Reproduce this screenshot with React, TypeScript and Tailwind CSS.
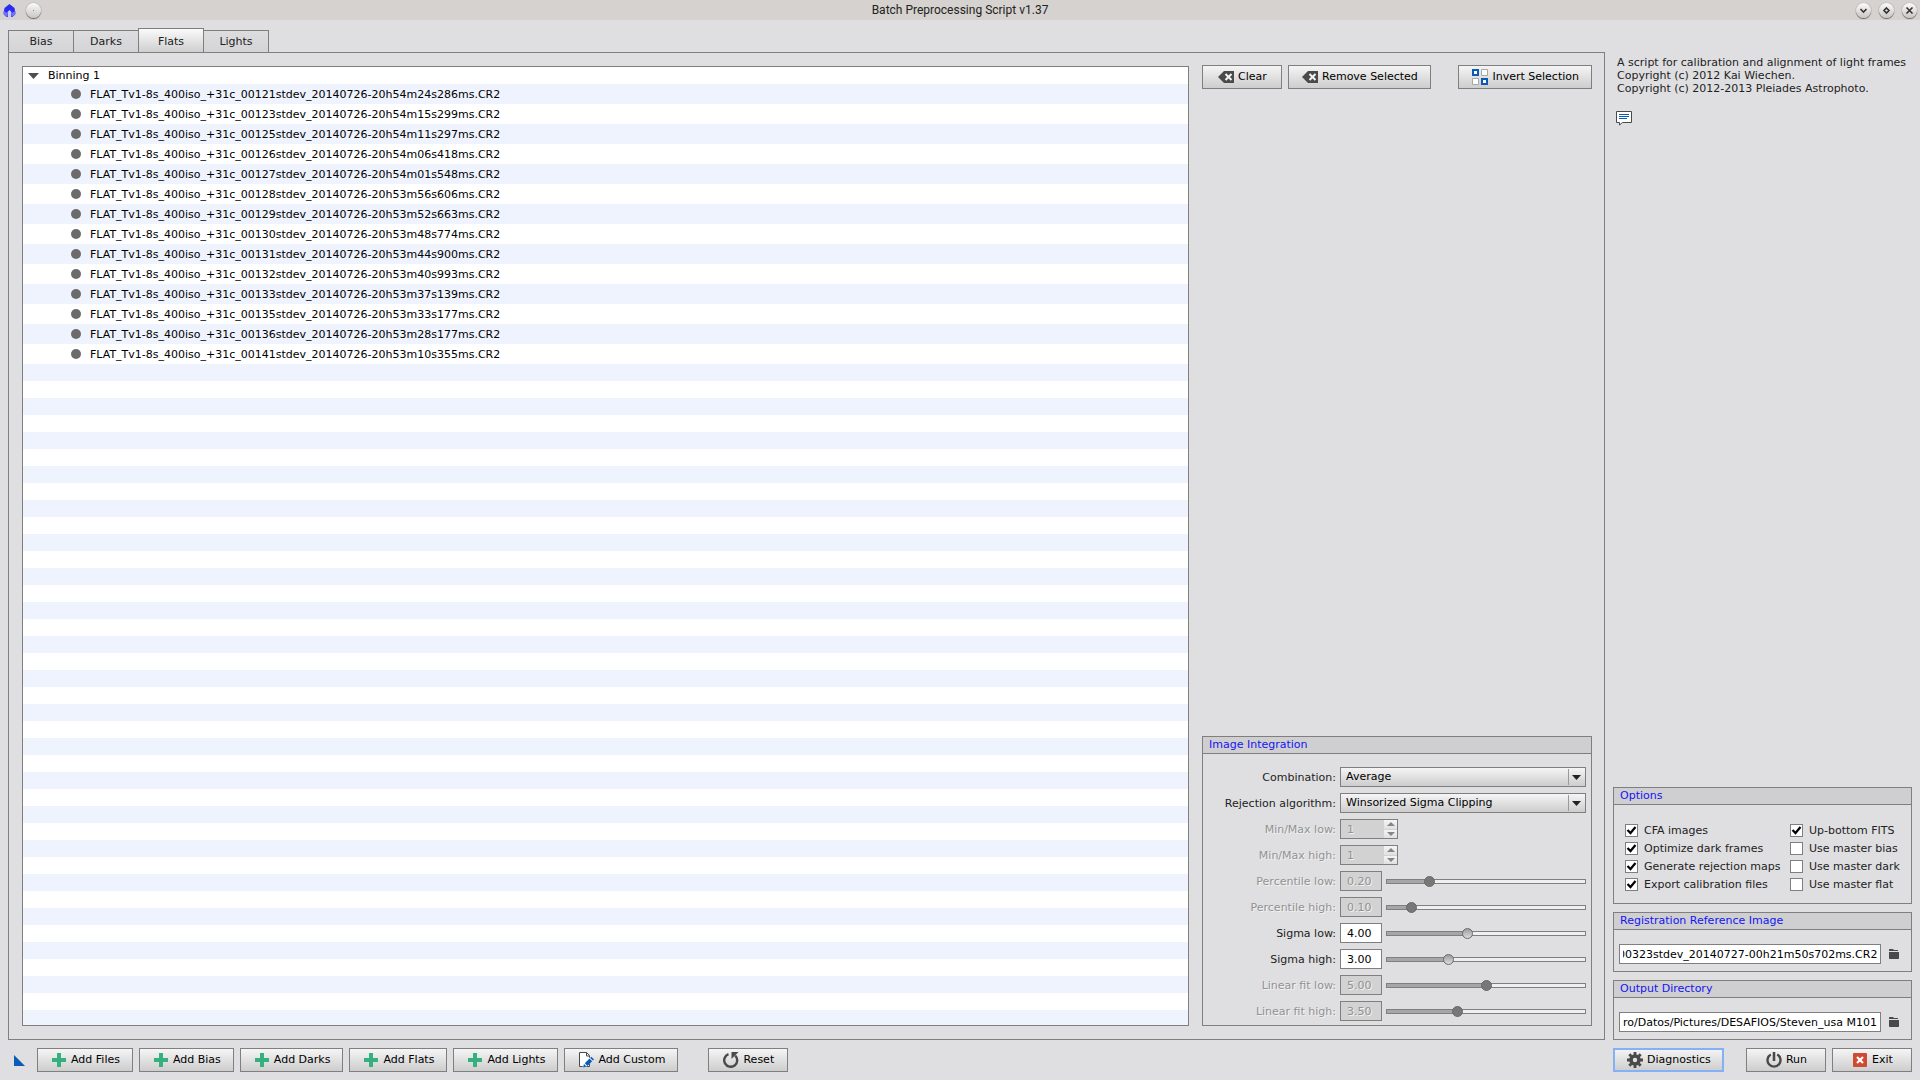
import { useEffect, useRef, useState, type ReactNode } from "react";

const FILES = [
  "FLAT_Tv1-8s_400iso_+31c_00121stdev_20140726-20h54m24s286ms.CR2",
  "FLAT_Tv1-8s_400iso_+31c_00123stdev_20140726-20h54m15s299ms.CR2",
  "FLAT_Tv1-8s_400iso_+31c_00125stdev_20140726-20h54m11s297ms.CR2",
  "FLAT_Tv1-8s_400iso_+31c_00126stdev_20140726-20h54m06s418ms.CR2",
  "FLAT_Tv1-8s_400iso_+31c_00127stdev_20140726-20h54m01s548ms.CR2",
  "FLAT_Tv1-8s_400iso_+31c_00128stdev_20140726-20h53m56s606ms.CR2",
  "FLAT_Tv1-8s_400iso_+31c_00129stdev_20140726-20h53m52s663ms.CR2",
  "FLAT_Tv1-8s_400iso_+31c_00130stdev_20140726-20h53m48s774ms.CR2",
  "FLAT_Tv1-8s_400iso_+31c_00131stdev_20140726-20h53m44s900ms.CR2",
  "FLAT_Tv1-8s_400iso_+31c_00132stdev_20140726-20h53m40s993ms.CR2",
  "FLAT_Tv1-8s_400iso_+31c_00133stdev_20140726-20h53m37s139ms.CR2",
  "FLAT_Tv1-8s_400iso_+31c_00135stdev_20140726-20h53m33s177ms.CR2",
  "FLAT_Tv1-8s_400iso_+31c_00136stdev_20140726-20h53m28s177ms.CR2",
  "FLAT_Tv1-8s_400iso_+31c_00141stdev_20140726-20h53m10s355ms.CR2",
];

const TABS = ["Bias", "Darks", "Flats", "Lights"];

const SLIDERS = [
  { label: "Percentile low:", initial: 0.2, max: 1, disabled: true },
  { label: "Percentile high:", initial: 0.1, max: 1, disabled: true },
  { label: "Sigma low:", initial: 4, max: 10, disabled: false },
  { label: "Sigma high:", initial: 3, max: 10, disabled: false },
  { label: "Linear fit low:", initial: 5, max: 10, disabled: true },
  { label: "Linear fit high:", initial: 3.5, max: 10, disabled: true },
];

const OPTIONS = [
  { label: "CFA images", checked: true },
  { label: "Up-bottom FITS", checked: true },
  { label: "Optimize dark frames", checked: true },
  { label: "Use master bias", checked: false },
  { label: "Generate rejection maps", checked: true },
  { label: "Use master dark", checked: false },
  { label: "Export calibration files", checked: true },
  { label: "Use master flat", checked: false },
];

/* Icons */

function PlusIcon() {
  return (
    <svg className="size-4" viewBox="0 0 16 16">
      <path d="M6 1h4v5h5v4h-5v5H6v-5H1V6h5z" fill="#35b07e" />
    </svg>
  );
}

function ClearIcon() {
  return (
    <svg className="size-4" viewBox="0 0 16 16">
      <path d="M6 2h10v12H6L0 8z" fill="#4a4a4a" />
      <path d="M7.500 5l6 6M13.500 5l-6 6" stroke="#f4f4f4" strokeWidth="2" />
    </svg>
  );
}

function InvertIcon() {
  return (
    <svg className="size-4" viewBox="0 0 16 16" fill="#fff">
      <path d="M1 1h5v5H1zM10 10h5v5h-5z" stroke="#0a5ab8" strokeWidth="2" />
      <path d="M9.500 .5h6v6h-6zM.5 9.500h6v6h-6z" stroke="#a8a8a8" />
    </svg>
  );
}

function CustomIcon() {
  return (
    <svg className="size-4" viewBox="0 0 16 16">
      <path d="M1.500 .5h7l3 3v11h-10z" fill="#fff" stroke="#4a4a4a" />
      <path d="M8.500 .5v3.500h3" fill="none" stroke="#4a4a4a" />
      <path d="M4.500 15.500l1-4 6-6 3.500 3-6.500 6z" fill="#fff" />
      <path d="M5 15.500l1-3.500 2.500 2.500z" fill="#0a5ab8" />
      <path d="M6.800 11.300l4.700-4.700 2.700 2.700-4.700 4.700z" fill="#0a5ab8" />
      <path d="M12.200 5.900l1.200-1.200 2.600 2.700-1.200 1.200z" fill="#0a5ab8" />
    </svg>
  );
}

function ResetIcon() {
  return (
    <svg className="size-4" viewBox="0 0 16 16">
      <path
        d="M5.500 2.200A6.500 6.500 0 1 0 12.200 3.600"
        fill="none"
        stroke="#4a4a4a"
        strokeWidth="2.400"
      />
      <path d="M8.500 0h7l-7 7z" fill="#4a4a4a" />
    </svg>
  );
}

function GearIcon() {
  return (
    <svg className="size-4" viewBox="0 0 16 16" fill="none" stroke="#4a4a4a">
      <circle cx="8" cy="8" r="4" strokeWidth="3.600" />
      <path
        d="M8 0v3M8 13v3M0 8h3M13 8h3M2.300 2.300l2.200 2.200M11.500 11.500l2.200 2.200M13.700 2.300l-2.200 2.200M4.500 11.500l-2.200 2.200"
        strokeWidth="2.800"
      />
    </svg>
  );
}

function PowerIcon() {
  return (
    <svg className="size-4" viewBox="0 0 16 16" fill="none" stroke="#4a4a4a">
      <path d="M4.800 2.500a6.500 6.500 0 1 0 6.400 0" strokeWidth="2.400" />
      <path d="M8 0v9" strokeWidth="2.600" />
    </svg>
  );
}

function ExitIcon() {
  return (
    <svg className="size-4" viewBox="0 0 16 16">
      <rect x="1" y="1" width="14" height="14" rx="1" fill="#cf4a30" />
      <path d="M5 5l6 6M11 5l-6 6" stroke="#fff" strokeWidth="2.200" />
    </svg>
  );
}

function FolderIcon() {
  return (
    <svg className="h-3 w-3" viewBox="0 0 12 12" fill="#4a4a4a">
      <path d="M1 3V1.500L1.500 1H5l1 1h4v1z" />
      <path d="M1 4h10v6.500l-.5.5h-9l-.5-.5z" />
    </svg>
  );
}

function CommentIcon() {
  return (
    <svg className="size-4" viewBox="0 0 16 16">
      <path
        d="M.5 1.500h15v11H6.500L3.500 15v-2.500h-3z"
        fill="#fff"
        stroke="#4a4a4a"
      />
      <path d="M3 4.500h10M3 6.500h10M3 8.500h8" stroke="#0a5ab8" />
    </svg>
  );
}

/* Controls */

interface PushButtonProps {
  icon: ReactNode;
  children: ReactNode;
  focused?: boolean;
}

function PushButton({ icon, children, focused = false }: PushButtonProps) {
  return (
    <button
      type="button"
      className={`flex h-6 min-w-20 items-center justify-center gap-1 whitespace-nowrap bg-linear-to-b from-[#f5f5f5] to-[#cdcdcd] pr-3 pl-[13px] text-black ${
        focused
          ? "border border-[#84b0f5] outline outline-[#84b0f5] -outline-offset-2"
          : "border border-[#7f7f7f]"
      }`}
    >
      {icon}
      <span className="pb-0.5">{children}</span>
    </button>
  );
}

function Group({ title, children }: { title: string; children: ReactNode }) {
  return (
    <section className="border border-[#7f7f7f]">
      <h2 className="h-[17px] border-b border-[#7f7f7f] bg-[#cfcfd1] pl-1.5 leading-4 text-[#1414f5]">
        {title}
      </h2>
      {children}
    </section>
  );
}

const DISABLED_TEXT = "text-[#929292] [text-shadow:1px_1px_0_#f2f2f2]";

function SelectRow({ id, label, options }: { id: string; label: string; options: string[] }) {
  return (
    <div className="flex h-5 items-center gap-1">
      <label htmlFor={id} className="w-[133px] text-right">
        {label}
      </label>
      <div className="relative flex-1">
        <select
          id={id}
          className="block h-5 w-full appearance-none border border-[#7f7f7f] bg-linear-to-b from-[#f5f5f5] to-[#cdcdcd] px-[5px] leading-4 text-black"
        >
          {options.map((option) => (
            <option key={option}>{option}</option>
          ))}
        </select>
        <span className="pointer-events-none absolute inset-y-0.5 right-0.5 flex w-4 items-center justify-center border-l border-[#9a9a9a]">
          <svg className="h-[5px] w-[9px]" viewBox="0 0 9 5">
            <path d="M0 0h9L4.500 5z" fill="#222" />
          </svg>
        </span>
      </div>
    </div>
  );
}

function SpinRow({ id, label }: { id: string; label: string }) {
  return (
    <div className="flex h-5 items-center gap-1">
      <label htmlFor={id} className={`w-[133px] text-right ${DISABLED_TEXT}`}>
        {label}
      </label>
      <div className="flex h-5 w-[58px] border border-[#7f7f7f] bg-[#d2d2d2]">
        <input
          id={id}
          defaultValue="1"
          disabled
          className={`min-w-0 flex-1 pl-1.5 ${DISABLED_TEXT}`}
        />
        <div className="grid w-[13px] grid-rows-2 gap-px">
          <button type="button" disabled aria-label="Increase" className="grid place-items-center bg-linear-to-b from-[#f5f5f5] to-[#e0e0e0]">
            <svg className="h-1 w-2" viewBox="0 0 8 4">
              <path d="M0 4h8L4 0z" fill="#858585" />
            </svg>
          </button>
          <button type="button" disabled aria-label="Decrease" className="grid place-items-center bg-linear-to-b from-[#f5f5f5] to-[#e0e0e0]">
            <svg className="h-1 w-2" viewBox="0 0 8 4">
              <path d="M0 0h8L4 4z" fill="#858585" />
            </svg>
          </button>
        </div>
      </div>
    </div>
  );
}

interface SliderRowProps {
  id: string;
  label: string;
  initial: number;
  max: number;
  disabled: boolean;
}

function SliderRow({ id, label, initial, max, disabled }: SliderRowProps) {
  const [value, setValue] = useState(initial);

  return (
    <div className="flex h-5 items-center gap-1">
      <label
        htmlFor={id}
        className={`w-[133px] text-right ${disabled ? DISABLED_TEXT : ""}`}
      >
        {label}
      </label>
      <input
        id={id}
        value={value.toFixed(2)}
        disabled={disabled}
        readOnly
        className={`h-5 w-[42px] border border-[#7f7f7f] pl-1.5 ${
          disabled ? `bg-[#d2d2d2] ${DISABLED_TEXT}` : "bg-white text-black"
        }`}
      />
      <input
        type="range"
        aria-label={label}
        min={0}
        max={max}
        step={max / 100}
        value={value}
        disabled={disabled}
        onChange={(e) => setValue(Number(e.target.value))}
        style={{ "--fill": `${(value / max) * 100}%` } as React.CSSProperties}
        className={`h-[11px] min-w-0 flex-1 appearance-none bg-transparent [&::-webkit-slider-runnable-track]:box-border [&::-webkit-slider-runnable-track]:h-[5px] [&::-webkit-slider-runnable-track]:border [&::-webkit-slider-runnable-track]:border-[#7f7f7f] [&::-webkit-slider-runnable-track]:bg-[linear-gradient(to_right,#a6a6a6_var(--fill),#efefef_var(--fill))] [&::-webkit-slider-thumb]:mt-[-4px] [&::-webkit-slider-thumb]:box-border [&::-webkit-slider-thumb]:size-[11px] [&::-webkit-slider-thumb]:appearance-none [&::-webkit-slider-thumb]:rounded-full [&::-webkit-slider-thumb]:border ${
          disabled
            ? "[&::-webkit-slider-thumb]:border-[#6a6a6a] [&::-webkit-slider-thumb]:bg-[#777777]"
            : "[&::-webkit-slider-thumb]:border-[#6a6a6a] [&::-webkit-slider-thumb]:bg-[linear-gradient(#9c9c9c,#dcdcdc)]"
        }`}
      />
    </div>
  );
}

function OptionBox({ label, checked }: { label: string; checked: boolean }) {
  return (
    <label className="flex h-[18px] items-center gap-1.5 whitespace-nowrap">
      <span className="relative size-[13px]">
        <input
          type="checkbox"
          defaultChecked={checked}
          className="peer block size-[13px] appearance-none border border-[#7f7f7f] bg-white"
        />
        <svg
          className="pointer-events-none absolute inset-0 hidden size-[13px] peer-checked:block"
          viewBox="0 0 13 13"
        >
          <path d="M2.500 6l3 3 5-6" fill="none" stroke="#000" strokeWidth="2.200" />
        </svg>
      </span>
      {label}
    </label>
  );
}

function PathRow({ label, value }: { label: string; value: string }) {
  const ref = useRef<HTMLInputElement>(null);

  // long paths are shown from their end
  useEffect(() => {
    if (ref.current) ref.current.scrollLeft = ref.current.scrollWidth;
  }, []);

  return (
    <div className="flex items-center pt-3.5 pr-[11px] pb-[7px] pl-[5px]">
      <input
        ref={ref}
        aria-label={label}
        defaultValue={value}
        className="h-5 min-w-0 flex-1 border border-[#7f7f7f] bg-white px-[3px] text-black"
      />
      <button type="button" aria-label={`Browse ${label}`} className="ml-[7px]">
        <FolderIcon />
      </button>
    </div>
  );
}

/* Window */

function TitleButton({ label, children }: { label: string; children: ReactNode }) {
  return (
    <button
      type="button"
      aria-label={label}
      className="grid size-[15px] place-items-center rounded-full bg-linear-to-b from-[#fbfbfa] to-[#c9c6c4] shadow-[0_1px_1px_#666666,0_0_1px_#666666]"
    >
      {children}
    </button>
  );
}

function TitleBar() {
  return (
    <header className="grid h-5 grid-cols-[1fr_auto_1fr] items-center bg-[#d6d2cf] px-[3px]">
      <div className="flex items-center gap-2.5">
        <svg className="h-[15px] w-[13px]" viewBox="0 0 13 15">
          <path d="M6.500 1l5 4 1 6-3 3h-6l-3-3 1-6z" fill="#2a2af0" />
          <path d="M6.500 7l2 2-.5 5h-3l-.5-5z" fill="#c9ccff" />
          <path d="M.5 8l4 2v4l-3.500-2zM12.500 8l-4 2v4l3.500-2z" fill="#6f74f5" />
        </svg>
        <TitleButton label="On all desktops">
          <span className="size-px rounded-full bg-[#666]" />
        </TitleButton>
      </div>
      <h1 className="font-[Roboto,sans-serif] text-[12px] text-[#222]">
        Batch Preprocessing Script v1.37
      </h1>
      <div className="flex items-center justify-end gap-2">
        <TitleButton label="Minimize">
          <svg className="size-[9px]" viewBox="0 0 9 9" fill="none" stroke="#333" strokeWidth="1.600">
            <path d="M1.500 3l3 3 3-3" />
          </svg>
        </TitleButton>
        <TitleButton label="Maximize">
          <svg className="size-[9px]" viewBox="0 0 9 9" fill="none" stroke="#333" strokeWidth="1.600">
            <path d="M4.500 2L7 4.500 4.500 7 2 4.500z" />
          </svg>
        </TitleButton>
        <TitleButton label="Close">
          <svg className="size-[9px]" viewBox="0 0 9 9" fill="none" stroke="#333" strokeWidth="1.600">
            <path d="M1.500 1.500l6 6M7.500 1.500l-6 6" />
          </svg>
        </TitleButton>
      </div>
    </header>
  );
}

function FileTree() {
  return (
    <div className="flex min-w-0 flex-1 flex-col overflow-hidden border border-[#7f7f7f] bg-white text-black">
      <div className="flex h-[17px] items-center pl-[5px]">
        <svg className="h-1.5 w-[11px]" viewBox="0 0 11 6">
          <path d="M0 0h11L5.500 6z" fill="#4f4f4f" />
        </svg>
        <span className="ml-[9px]">Binning 1</span>
      </div>
      <ul>
        {FILES.map((file) => (
          <li key={file} className="flex h-5 items-center gap-[9px] pl-12 odd:bg-[#eff3fe]">
            <span className="size-2.5 rounded-full bg-[#6b6b6b]" />
            {file}
          </li>
        ))}
      </ul>
      <div className="flex-1 bg-[repeating-linear-gradient(#eff3fe_0_17px,#ffffff_17px_34px)]" />
    </div>
  );
}

function SidePanel() {
  return (
    <div className="flex w-[390px] shrink-0 flex-col justify-between">
      <div className="-mt-px flex gap-1.5">
        <PushButton icon={<ClearIcon />}>Clear</PushButton>
        <PushButton icon={<ClearIcon />}>Remove Selected</PushButton>
        <div className="flex flex-1 justify-end">
          <PushButton icon={<InvertIcon />}>Invert Selection</PushButton>
        </div>
      </div>
      <Group title="Image Integration">
        <div className="flex flex-col gap-1.5 pt-[13px] pr-[5px] pb-1">
          <SelectRow id="combination" label="Combination:" options={["Average", "Median"]} />
          <SelectRow
            id="rejection"
            label="Rejection algorithm:"
            options={["Winsorized Sigma Clipping", "Linear Fit Clipping"]}
          />
          <SpinRow id="minmax-low" label="Min/Max low:" />
          <SpinRow id="minmax-high" label="Min/Max high:" />
          {SLIDERS.map((slider, i) => (
            <SliderRow key={slider.label} id={`slider-${i}`} {...slider} />
          ))}
        </div>
      </Group>
    </div>
  );
}

export default function App() {
  const [tab, setTab] = useState("Flats");

  return (
    <div className="flex h-screen flex-col bg-[#dfdfe1] font-['DejaVu_Sans',sans-serif] text-[11px] leading-[13px] text-[#222]">
      <TitleBar />
      <div className="flex min-h-0 flex-1 gap-2 px-2 pt-2 pb-2">
        <main className="flex min-w-0 flex-1 flex-col">
          <nav className="flex items-end">
            {TABS.map((name) => (
              <button
                key={name}
                type="button"
                onClick={() => setTab(name)}
                className={`border-t border-l border-[#7f7f7f] last:w-[66px] last:border-r ${
                  name === tab
                    ? "-mr-px h-6 w-[66px] border-r bg-linear-to-b from-[#fafafa] to-[#cfcfcf] pt-0.5"
                    : "h-[22px] w-[65px] bg-linear-to-b from-[#dddddf] to-[#d4d4d6]"
                }`}
              >
                {name}
              </button>
            ))}
          </nav>
          <div className="flex min-h-0 flex-1 gap-[13px] border border-[#7f7f7f] p-[13px] pr-3">
            <FileTree />
            <SidePanel />
          </div>
          <footer className="flex items-center pt-2">
            <svg className="ml-1.5 size-[11px]" viewBox="0 0 11 11">
              <path d="M0 0l11 11H0z" fill="#0a5ab8" />
            </svg>
            <div className="ml-3 flex gap-1.5">
              <PushButton icon={<PlusIcon />}>Add Files</PushButton>
              <PushButton icon={<PlusIcon />}>Add Bias</PushButton>
              <PushButton icon={<PlusIcon />}>Add Darks</PushButton>
              <PushButton icon={<PlusIcon />}>Add Flats</PushButton>
              <PushButton icon={<PlusIcon />}>Add Lights</PushButton>
              <PushButton icon={<CustomIcon />}>Add Custom</PushButton>
            </div>
            <div className="ml-[30px]">
              <PushButton icon={<ResetIcon />}>Reset</PushButton>
            </div>
          </footer>
        </main>
        <aside className="flex w-[299px] shrink-0 flex-col gap-2">
          <div className="flex-1 pt-7 pl-1">
            <p>A script for calibration and alignment of light frames</p>
            <p>Copyright (c) 2012 Kai Wiechen.</p>
            <p>Copyright (c) 2012-2013 Pleiades Astrophoto.</p>
            <button type="button" aria-label="Script information" className="mt-[15px] -ml-px block">
              <CommentIcon />
            </button>
          </div>
          <Group title="Options">
            <div className="grid grid-cols-[165px_1fr] pt-4 pb-2.5 pl-[11px]">
              {OPTIONS.map((option) => (
                <OptionBox key={option.label} {...option} />
              ))}
            </div>
          </Group>
          <Group title="Registration Reference Image">
            <PathRow label="Registration Reference Image" value="00323stdev_20140727-00h21m50s702ms.CR2" />
          </Group>
          <Group title="Output Directory">
            <PathRow label="Output Directory" value="dro/Datos/Pictures/DESAFIOS/Steven_usa M101" />
          </Group>
          <div className="flex gap-1.5">
            <PushButton icon={<GearIcon />} focused>
              Diagnostics
            </PushButton>
            <div className="flex flex-1 justify-end gap-1.5">
              <PushButton icon={<PowerIcon />}>Run</PushButton>
              <PushButton icon={<ExitIcon />}>Exit</PushButton>
            </div>
          </div>
        </aside>
      </div>
    </div>
  );
}
